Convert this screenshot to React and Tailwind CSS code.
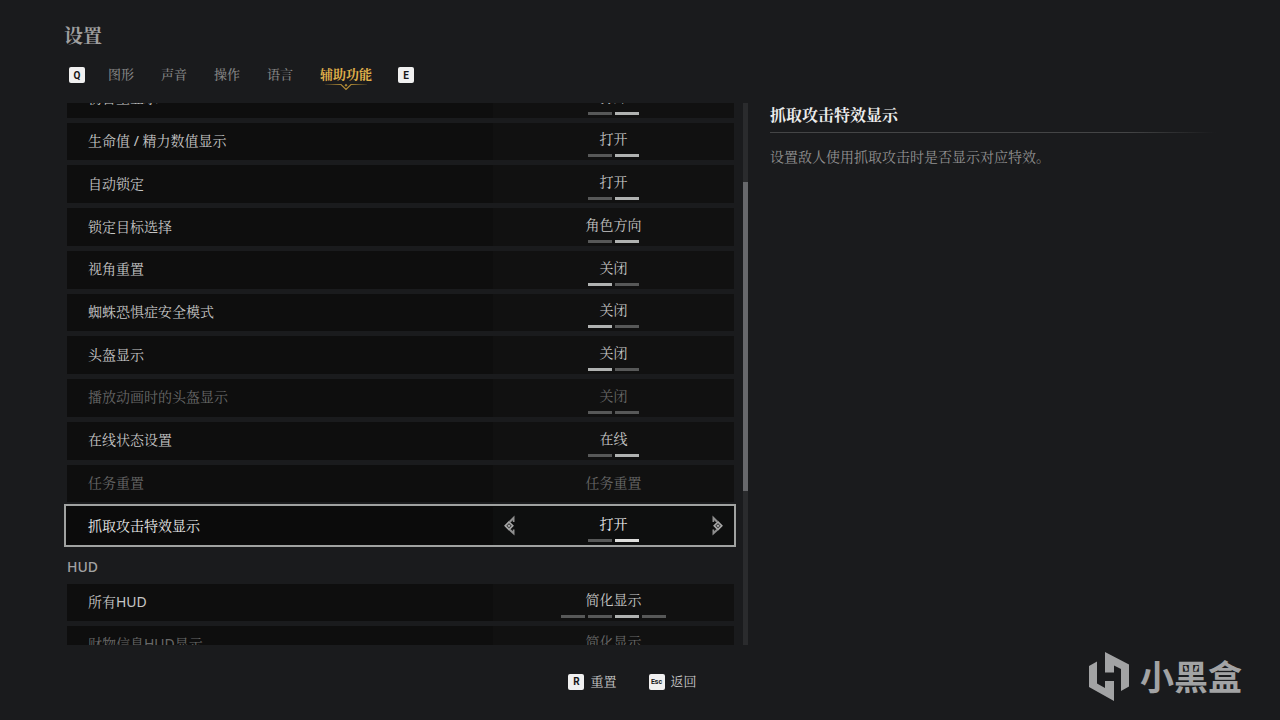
import React from "react";

const BODY_FONT = "font-['Noto_Sans','Noto_Serif_CJK_SC','Noto_Sans_CJK_SC',serif]";

const TABS = ["图形", "声音", "操作", "语言", "辅助功能"];

const OPTIONS = [
  { label: "伤害量显示", value: "打开", count: 2, active: 1 },
  { label: "生命值 / 精力数值显示", value: "打开", count: 2, active: 1 },
  { label: "自动锁定", value: "打开", count: 2, active: 1 },
  { label: "锁定目标选择", value: "角色方向", count: 2, active: 1 },
  { label: "视角重置", value: "关闭", count: 2, active: 0 },
  { label: "蜘蛛恐惧症安全模式", value: "关闭", count: 2, active: 0 },
  { label: "头盔显示", value: "关闭", count: 2, active: 0 },
  { label: "播放动画时的头盔显示", value: "关闭", count: 2, active: -1, disabled: true },
  { label: "在线状态设置", value: "在线", count: 2, active: 1 },
  { label: "任务重置", value: "任务重置", count: 0, active: -1, disabled: true },
  { label: "抓取攻击特效显示", value: "打开", count: 2, active: 1, selected: true },
];

const HUD_OPTIONS = [
  { label: "所有HUD", value: "简化显示", count: 4, active: 2 },
  { label: "财物信息HUD显示", value: "简化显示", count: 4, active: -1, disabled: true },
];

function Key({ children, small }) {
  return (
    <kbd
      className={`mt-[2px] flex size-4 shrink-0 items-center justify-center rounded-[2px] bg-[#f0f0f0] font-['Roboto',sans-serif] font-bold text-[#161616] ${
        small ? "text-[7px]" : "text-[10px]"
      }`}
    >
      {children}
    </kbd>
  );
}

function Arrow({ flip }) {
  return (
    <svg viewBox="0 0 12 22" className={`h-[22px] w-3 ${flip ? "-scale-x-100" : ""}`} aria-hidden="true">
      <path d="M11.500 .5V7H9.800V5.300L7.600 7.500 6 6z" fill="#8f8f8f" />
      <path d="M11.500 20.500V14.500H9.800v1.700L7.600 14 6 15.500z" fill="#8f8f8f" />
      <path d="M6 7 9.800 10.800 6 14.600 2.200 10.800z" fill="#3a3b3b" stroke="#a9a9a9" strokeWidth="1.600" />
      <path d="M6 9.400 7.400 10.800 6 12.200 4.600 10.800z" fill="#b4b4b4" />
    </svg>
  );
}

function Row({ option }) {
  const { label, value, count, active, disabled, selected } = option;
  const tone = disabled ? "text-[#686868]" : selected ? "text-[#ececec]" : "text-[#c6c6c6]";
  return (
    <li className={`relative flex min-h-[37px] bg-[#0e0e0e] text-sm ${tone}`}>
      {selected && (
        <span className="pointer-events-none absolute -top-[3px] -right-[2px] -bottom-[2px] -left-[3px] border-2 border-[#a0a2a1] bg-[#0b0b0b]" />
      )}
      <span className="relative flex flex-1 items-center pb-px pl-[21px]">{label}</span>
      <div
        className={`relative flex w-[241px] items-center justify-between px-[10px] ${
          selected ? "bg-[#0e0f0f]" : "bg-[#111111]"
        }`}
      >
        <button type="button" aria-label={`${label} 上一项`} className="w-3">
          {selected && <Arrow />}
        </button>
        <div className="flex h-full flex-col items-center justify-end gap-[5px] pb-[3px]">
          <span className={`leading-5 ${count ? "" : "mb-[6px]"}`}>{value}</span>
          {count > 0 && (
            <div className="flex gap-[3px]">
              {Array.from({ length: count }, (_, i) => (
                <span
                  key={i}
                  className={`h-[3px] w-6 ${
                    i === active ? (selected ? "bg-[#dededc]" : "bg-[#b0b2b1]") : "bg-[#575858]"
                  }`}
                />
              ))}
            </div>
          )}
        </div>
        <button type="button" aria-label={`${label} 下一项`} className="w-3">
          {selected && <Arrow flip />}
        </button>
      </div>
    </li>
  );
}

function TabMarker() {
  return (
    <svg
      viewBox="0 0 42 8"
      className="absolute top-[22px] left-1/2 h-2 w-[42px] -translate-x-1/2"
      fill="none"
      aria-hidden="true"
    >
      <defs>
        <linearGradient id="marker" gradientUnits="userSpaceOnUse" x1="0" y1="0" x2="42" y2="0">
          <stop offset="0" stopColor="#b08a35" stopOpacity=".15" />
          <stop offset=".4" stopColor="#b08a35" />
          <stop offset=".6" stopColor="#b08a35" />
          <stop offset="1" stopColor="#b08a35" stopOpacity=".15" />
        </linearGradient>
      </defs>
      <path d="M0 1.500h16l5 5 5-5h16" stroke="url(#marker)" strokeWidth="1.200" />
      <path d="M21 .8 22.500 2.300 21 3.800l-1.500-1.500z" fill="#b08a35" />
    </svg>
  );
}

function Watermark() {
  return (
    <div className="flex items-center gap-[11px] text-[#a2a3a4]">
      <svg viewBox="0 0 40 50" className="h-[50px] w-10" fill="currentColor" aria-hidden="true">
        <path d="M0 15 8 10.500v22l8 4.500v-7h9v20L0 36z" />
        <path d="M16 1 40 13.500v22L32 40V18l-7-3.500v7h-9z" />
      </svg>
      <span className="font-['Noto_Sans_CJK_SC',sans-serif] text-[34px] leading-[50px] font-bold">小黑盒</span>
    </div>
  );
}

export default function App() {
  return (
    <div className={`flex min-h-screen flex-col bg-[#1a1b1d] ${BODY_FONT}`}>
      <header className="px-16 pt-[21px]">
        <h1 className="text-[19px] leading-[30px] font-bold text-[#a0a0a0]">设置</h1>
        <nav className="mt-[10px] flex h-[26px] items-center pl-[5px]">
          <Key>Q</Key>
          <div className="flex gap-[27px] pr-[26px] pl-[23px]">
            {TABS.map((tab, i) => {
              const current = i === TABS.length - 1;
              return (
                <button
                  key={tab}
                  type="button"
                  className={`relative text-[13px] leading-[26px] ${
                    current ? "font-bold text-[#e0b04a]" : "font-medium text-[#858585]"
                  }`}
                >
                  {tab}
                  {current && <TabMarker />}
                </button>
              );
            })}
          </div>
          <Key>E</Key>
        </nav>
      </header>

      <main className="mt-4 flex pl-16">
        <div className="flex h-[542px] w-[684px] shrink-0 justify-between">
          <div className="flex-1 overflow-hidden pr-[9px] pl-[3px]">
            <ul className="-mt-[23px] grid h-[465px] auto-rows-fr gap-[5px]">
              {OPTIONS.map((o) => (
                <Row key={o.label} option={o} />
              ))}
            </ul>
            <h2 className="pt-3 pb-[7px] text-sm leading-5 font-medium text-[#a2a2a2]">HUD</h2>
            <ul className="grid gap-[5px]">
              {HUD_OPTIONS.map((o) => (
                <Row key={o.label} option={o} />
              ))}
            </ul>
          </div>
          <div className="w-[5px] bg-[#2a2b2d] pt-[79px]">
            <div className="h-[309px] bg-[#67686b]" />
          </div>
        </div>
        <section className="flex-1 pr-16 pl-[22px]">
          <h2 className="text-base leading-6 font-bold text-[#ececec]">抓取攻击特效显示</h2>
          <div className="mt-[5px] h-px bg-linear-to-r from-[#444546] from-80% to-transparent" />
          <p className="mt-3 text-sm leading-6 text-[#929292]">设置敌人使用抓取攻击时是否显示对应特效。</p>
        </section>
      </main>

      <footer className="relative flex justify-center gap-8 pt-[26px] pr-[15px] text-[13px] leading-5 text-[#cacaca]">
        <button type="button" className="flex items-center gap-[6px]">
          <Key>R</Key>重置
        </button>
        <button type="button" className="flex items-center gap-[6px]">
          <Key small>Esc</Key>返回
        </button>
        <div className="absolute top-[6px] right-[38px]">
          <Watermark />
        </div>
      </footer>
    </div>
  );
}
